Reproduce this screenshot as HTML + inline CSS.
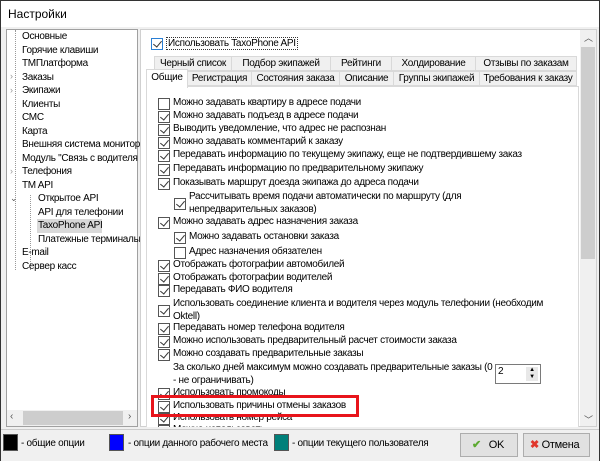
<!DOCTYPE html>
<html><head><meta charset="utf-8"><style>
*{box-sizing:border-box;margin:0;padding:0}
body{width:600px;height:461px;overflow:hidden;background:#f0f0f0;font-family:"Liberation Sans",sans-serif;font-size:10px;letter-spacing:-0.3px;color:#000;position:relative}
.win{position:absolute;left:0;top:0;width:600px;height:461px;border:1px solid #333;background:#f0f0f0}
.title{position:absolute;left:0;top:0;width:598px;height:26px;background:#fff;font-size:12px;letter-spacing:0;padding:6px 7px}
.a{position:absolute;white-space:nowrap}
.left{position:absolute;left:5px;top:28px;width:132px;height:398px;background:#fff;border:1px solid #a0a0a0;overflow:hidden}
.right{position:absolute;left:139px;top:28px;width:457px;height:398px;background:#fff;border:1px solid #d0d0d0;overflow:hidden}
.cb{position:absolute;width:12px;height:12px;border:1px solid #333;background:#fff}
.cb.c::after{content:"";position:absolute;left:3px;top:0px;width:4px;height:7px;border:solid #333;border-width:0 1.3px 1.3px 0;transform:rotate(40deg)}
.tab{position:absolute;height:15px;border:1px solid #d9d9d9;background:#f0f0f0;text-align:center;line-height:13px;white-space:nowrap;overflow:hidden}
.dot{position:absolute;border-left:1px dotted #999}
.btn{position:absolute;height:24px;border:1px solid #adadad;background:#e1e1e1;line-height:22px;font-size:11px}
.sq{position:absolute;width:15px;height:17px;border:1px solid #555}
</style></head><body><div class="win">
<div class="title">Настройки</div>
<div class="left">
<div class="dot" style="left:8px;top:0;height:240px"></div>
<div class="dot" style="left:23px;top:165px;height:75px"></div>
<div style="position:absolute;left:30px;top:189px;width:65px;height:14px;background:#d9d9d9"></div>
</div>
<div class="a" style="left:21px;top:29px;line-height:13.5px">Основные<br>Горячие клавиши<br>ТМПлатформа<br>Заказы<br>Экипажи<br>Клиенты<br>СМС<br>Карта<br>Внешняя система монитори<br>Модуль "Связь с водителя<br>Телефония<br>TM API</div>
<div class="a" style="left:37px;top:191px;line-height:13.5px">Открытое API<br>API для телефонии<br>TaxoPhone API<br>Платежные терминалы</div>
<div class="a" style="left:21px;top:245px;line-height:13.5px">E-mail<br>Сервер касс</div>
<div class="a" style="left:9px;top:69px;color:#999;font-size:9px;line-height:13.5px">›<br>›<br><br><br><br><br><br>›<br><br><span style="color:#555">⌄</span></div>
<div style="position:absolute;left:6px;top:409px;width:130px;height:16px;background:#f0f0f0"></div>
<div style="position:absolute;left:22px;top:410px;width:100px;height:14px;background:#cdcdcd"></div>
<div class="a" style="left:9px;top:410px;color:#555">‹</div><div class="a" style="left:127px;top:410px;color:#555">›</div>
<div class="right"></div>
<div style="position:absolute;left:579px;top:29px;width:16px;height:396px;background:#f0f0f0"></div>
<div style="position:absolute;left:580px;top:46px;width:14px;height:212px;background:#cdcdcd"></div>
<div class="a" style="left:583px;top:30px;font-size:9px;color:#555">︿</div>
<div class="a" style="left:583px;top:412px;font-size:9px;color:#555">﹀</div>
<div class="cb c" style="left:150px;top:37px;border-color:#2a7fd4"></div>
<div class="a" style="left:165px;top:36px;border:1px dotted #333;padding:0 1px">Использовать TaxoPhone API</div>
<div class="tab" style="left:153px;top:55px;width:78px">Черный список</div>
<div class="tab" style="left:230px;top:55px;width:100px">Подбор экипажей</div>
<div class="tab" style="left:329px;top:55px;width:62px">Рейтинги</div>
<div class="tab" style="left:390px;top:55px;width:85px">Холдирование</div>
<div class="tab" style="left:474px;top:55px;width:102px">Отзывы по заказам</div>
<div class="tab" style="left:186px;top:70px;width:65px">Регистрация</div>
<div class="tab" style="left:250px;top:70px;width:89px">Состояния заказа</div>
<div class="tab" style="left:338px;top:70px;width:55px">Описание</div>
<div class="tab" style="left:392px;top:70px;width:87px">Группы экипажей</div>
<div class="tab" style="left:478px;top:70px;width:98px">Требования к заказу</div>
<div style="position:absolute;left:145px;top:85px;width:433px;height:345px;border:1px solid #d9d9d9;background:#fff"></div>
<div class="tab" style="left:145px;top:68px;width:42px;height:19px;background:#fff;border-bottom:none;line-height:15px">Общие</div>
<div id="items"></div>
<div style="position:absolute;left:140px;top:426px;width:440px;height:4px;background:#f0f0f0"></div>
<div style="position:absolute;left:150px;top:394px;width:208px;height:22px;border:3px solid #e8141b"></div>
<div style="position:absolute;left:494px;top:363px;width:46px;height:20px;border:1px solid #7a7a7a;background:#fff;padding:1px 2px">2<div style="position:absolute;right:2px;top:2px;width:12px;height:14px;background:#e8e8e8;font-size:6px;line-height:7px;text-align:center">▲<br>▼</div></div>
<div style="position:absolute;left:0;top:428px;width:598px;height:32px;background:#f0f0f0;border-top:1px solid #ccc"></div>
<div class="sq" style="left:2px;top:433px;background:#000"></div><div class="a" style="left:20px;top:437px">- общие опции</div>
<div class="sq" style="left:108px;top:433px;background:#0000ff"></div><div class="a" style="left:127px;top:437px">- опции данного рабочего места</div>
<div class="sq" style="left:273px;top:433px;background:#00807a"></div><div class="a" style="left:291px;top:437px">- опции текущего пользователя</div>
<div class="btn" style="left:459px;top:432px;width:58px"><span style="color:#5ca930;font-weight:bold;margin-left:11px">✔</span> <span style="margin-left:5px">OK</span></div>
<div class="btn" style="left:522px;top:432px;width:67px"><span style="color:#e0362b;font-weight:bold;margin-left:6px">✖</span> Отмена</div>
</div>
<script>
var it=[[0,0,97,"Можно задавать квартиру в адресе подачи"],[0,1,110,"Можно задавать подъезд в адресе подачи"],[0,1,123,"Выводить уведомление, что адрес не распознан"],[0,1,136,"Можно задавать комментарий к заказу"],[0,1,149,"Передавать информацию по текущему экипажу, еще не подтвердившему заказ"],[0,1,163,"Передавать информацию по предварительному экипажу"],[0,1,177,"Показывать маршрут доезда экипажа до адреса подачи"],[1,1,191,"Рассчитывать время подачи автоматически по маршруту (для<br>непредварительных заказов)"],[0,1,216,"Можно задавать адрес назначения заказа"],[1,1,231,"Можно задавать остановки заказа"],[1,0,246,"Адрес назначения обязателен"],[0,1,259,"Отображать фотографии автомобилей"],[0,1,272,"Отображать фотографии водителей"],[0,1,284,"Передавать ФИО водителя"],[0,1,298,"Использовать соединение клиента и водителя через модуль телефонии (необходим<br>Oktell)"],[0,1,322,"Передавать номер телефона водителя"],[0,1,335,"Можно использовать предварительный расчет стоимости заказа"],[0,1,348,"Можно создавать предварительные заказы"],[2,-1,362,"За сколько дней максимум можно создавать предварительные заказы (0<br>- не ограничивать)"],[0,1,387,"Использовать промокоды"],[0,1,400,"Использовать причины отмены заказов"],[0,1,412,"Использовать номер рейса"],[0,1,424,"Можно использовать ..."]];
var h="";it.forEach(function(r){var x=157+r[0]*16,ml=r[3].indexOf("<br>")>0;
if(r[1]>=0)h+='<div class="cb'+(r[1]?' c':'')+'" style="left:'+x+'px;top:'+(r[2]+(ml?6:0))+'px;border-color:#555"></div>';
h+='<div class="a" style="left:'+(r[0]==2?172:x+15)+'px;top:'+(r[2]-1)+'px;line-height:12.5px">'+r[3]+'</div>';});
document.getElementById("items").innerHTML=h;
</script>
</body></html>
